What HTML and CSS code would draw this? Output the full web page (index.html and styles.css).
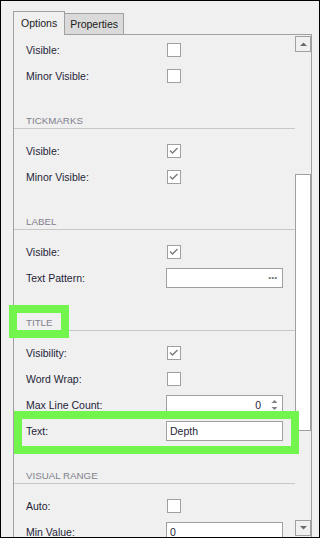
FILE: index.html
```html
<!DOCTYPE html>
<html lang="en">
<head>
    <meta charset="UTF-8">
    <meta name="viewport" content="width=device-width, initial-scale=1.0">
    <title>Axis Options</title>
    <link rel="stylesheet" href="styles.css">
</head>
<body>
    <div class="window">
        <div class="tabs">
            <div class="tab active">Options</div>
            <div class="tab">Properties</div>
        </div>
        <div class="panel">
            <div class="content">
                <div class="row">
                    <span class="label">Visible:</span>
                    <span class="check"></span>
                </div>
                <div class="row">
                    <span class="label">Minor Visible:</span>
                    <span class="check"></span>
                </div>

                <div class="section">TICKMARKS</div>
                <div class="row">
                    <span class="label">Visible:</span>
                    <span class="check checked"><svg viewBox="0 0 12 12"><path d="M2 5.5 L4.5 8 L9.5 3"/></svg></span>
                </div>
                <div class="row">
                    <span class="label">Minor Visible:</span>
                    <span class="check checked"><svg viewBox="0 0 12 12"><path d="M2 5.5 L4.5 8 L9.5 3"/></svg></span>
                </div>

                <div class="section">LABEL</div>
                <div class="row">
                    <span class="label">Visible:</span>
                    <span class="check checked"><svg viewBox="0 0 12 12"><path d="M2 5.5 L4.5 8 L9.5 3"/></svg></span>
                </div>
                <div class="row">
                    <span class="label">Text Pattern:</span>
                    <span class="field"><span class="value"></span><span class="dots">&middot;&middot;&middot;</span></span>
                </div>

                <div class="section">TITLE</div>
                <div class="row">
                    <span class="label">Visibility:</span>
                    <span class="check checked"><svg viewBox="0 0 12 12"><path d="M2 5.5 L4.5 8 L9.5 3"/></svg></span>
                </div>
                <div class="row">
                    <span class="label">Word Wrap:</span>
                    <span class="check"></span>
                </div>
                <div class="row">
                    <span class="label">Max Line Count:</span>
                    <span class="field spin">
                        <span class="value num">0</span>
                        <span class="arrows">
                            <svg viewBox="0 0 7 4"><path d="M0.5 4 L3.5 1 L6.5 4 Z"/></svg>
                            <svg viewBox="0 0 7 4"><path d="M0.5 0 L3.5 3 L6.5 0 Z"/></svg>
                        </span>
                    </span>
                </div>
                <div class="row">
                    <span class="label">Text:</span>
                    <span class="field"><span class="value">Depth</span></span>
                </div>

                <div class="section">VISUAL RANGE</div>
                <div class="row">
                    <span class="label">Auto:</span>
                    <span class="check"></span>
                </div>
                <div class="row">
                    <span class="label">Min Value:</span>
                    <span class="field"><span class="value">0</span></span>
                </div>
            </div>
            <div class="scrollbar">
                <div class="sb-btn"><svg viewBox="0 0 7 4"><path d="M0 4 L3.5 0.5 L7 4 Z"/></svg></div>
                <div class="thumb"></div>
                <div class="sb-btn down"><svg viewBox="0 0 7 4"><path d="M0 0 L3.5 3.5 L7 0 Z"/></svg></div>
            </div>
        </div>
        <div class="mark mark-title"></div>
        <div class="mark mark-text"></div>
    </div>
</body>
</html>
```

FILE: styles.css
```css
body {
    margin: 0;
    padding: 0;
    font-family: "Liberation Sans", Arial, sans-serif;
    font-size: 10.5px;
    color: #1f1f38;
}
.window {
    position: relative;
    width: 320px;
    height: 538px;
    box-sizing: border-box;
    border: 1px solid #000;
    background-color: #f0f0f0;
    overflow: hidden;
}
.tabs {
    display: flex;
    align-items: flex-end;
    padding: 10px 0 0 12px;
}
.tab {
    box-sizing: border-box;
    height: 21px;
    padding: 0 5px;
    line-height: 20px;
    border-top: 1px solid #a0a0a0;
    border-right: 1px solid #a0a0a0;
    background-color: #dadada;
    color: #1a1a1a;
    font-size: 10.5px;
}
.tab.active {
    position: relative;
    z-index: 1;
    height: 24px;
    margin-bottom: -1px;
    padding: 0 7px 0 7px;
    line-height: 22px;
    border-left: 1px solid #a0a0a0;
    background-color: #f0f0f0;
}
.panel {
    display: flex;
    width: 299px;
    height: 503px;
    margin-left: 12px;
    box-sizing: border-box;
    border: 1px solid #a0a0a0;
    border-bottom: none;
    overflow: hidden;
}
.content {
    width: 281px;
    padding-top: 2px;
}
.row {
    display: flex;
    align-items: center;
    height: 26px;
    padding-left: 12px;
}
.label {
    width: 140px;
    white-space: nowrap;
}
.section {
    padding: 25px 0 0 12px;
    margin-bottom: 9px;
    height: 14px;
    line-height: 14px;
    border-bottom: 1px solid #c8c8c8;
    color: #80808c;
    font-size: 9.75px;
}
.check {
    display: block;
    box-sizing: border-box;
    width: 14px;
    height: 14px;
    margin-left: 1px;
    border: 1px solid #a0a0a0;
    background-color: #fff;
}
.check svg {
    display: block;
    width: 12px;
    height: 12px;
}
.check path {
    fill: none;
    stroke: #787878;
    stroke-width: 1.3;
}
.field {
    display: flex;
    align-items: center;
    box-sizing: border-box;
    width: 117px;
    height: 20px;
    padding: 0 3px 0 3px;
    border: 1px solid #a0a0a0;
    background-color: #fff;
}
.value {
    flex: 1;
    white-space: nowrap;
}
.value.num {
    text-align: right;
    padding-right: 10px;
}
.dots {
    color: #707070;
    font-size: 12px;
    font-weight: bold;
    letter-spacing: -1px;
    padding-right: 2px;
}
.arrows {
    display: flex;
    flex-direction: column;
    gap: 4px;
    padding-right: 1px;
}
.arrows svg {
    display: block;
    width: 7px;
    height: 4px;
    fill: #808080;
}
.scrollbar {
    display: flex;
    flex-direction: column;
    width: 16px;
    padding-top: 1px;
}
.sb-btn {
    display: flex;
    align-items: center;
    justify-content: center;
    box-sizing: border-box;
    height: 16px;
    border: 1px solid #a0a0a0;
    background-color: #f0f0f0;
}
.sb-btn svg {
    width: 7px;
    height: 4px;
    fill: #6a6a6a;
}
.thumb {
    box-sizing: border-box;
    height: 257px;
    margin: 122px 0 89px;
    border: 1px solid #a0a0a0;
    background-color: #fff;
}
.mark {
    position: absolute;
    box-sizing: border-box;
    border: 8px solid #72f54c;
}
.mark-title {
    left: 8px;
    top: 304px;
    width: 60px;
    height: 33px;
}
.mark-text {
    left: 13px;
    top: 410px;
    width: 285px;
    height: 43px;
}
```
